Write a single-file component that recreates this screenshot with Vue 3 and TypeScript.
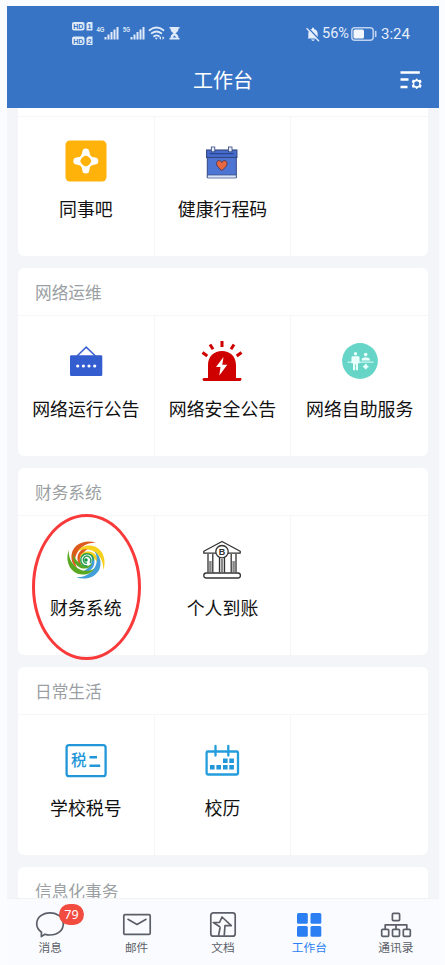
<script setup lang="ts">
interface AppItem {
  label: string
  icon: string
  marked?: boolean
}

interface Section {
  title: string
  items: AppItem[]
}

interface Tab {
  label: string
  icon: string
  badge?: number
  active?: boolean
}

const sections: Section[] = [
  {
    title: '',
    items: [
      { label: '同事吧', icon: 'circle' },
      { label: '健康行程码', icon: 'health' },
    ],
  },
  {
    title: '网络运维',
    items: [
      { label: '网络运行公告', icon: 'notice' },
      { label: '网络安全公告', icon: 'alarm' },
      { label: '网络自助服务', icon: 'service' },
    ],
  },
  {
    title: '财务系统',
    items: [
      { label: '财务系统', icon: 'swirl', marked: true },
      { label: '个人到账', icon: 'bank' },
    ],
  },
  {
    title: '日常生活',
    items: [
      { label: '学校税号', icon: 'tax' },
      { label: '校历', icon: 'calendar' },
    ],
  },
  { title: '信息化事务', items: [] },
]

const tabs: Tab[] = [
  { label: '消息', icon: 'chat', badge: 79 },
  { label: '邮件', icon: 'mail' },
  { label: '文档', icon: 'docs' },
  { label: '工作台', icon: 'grid', active: true },
  { label: '通讯录', icon: 'contacts' },
]

const swirlArms = [
  { angle: 0, color: '#dc5a1c' },
  { angle: 90, color: '#f7cf1d' },
  { angle: 180, color: '#429fd8' },
  { angle: 270, color: '#5aa822' },
]
</script>

<template>
  <div class="phone">
    <header class="header">
      <div class="status">
        <svg class="signals" width="110" height="26" viewBox="0 0 110 26">
          <g fill="#dfeaf9">
            <rect x="0" y="2" width="12.5" height="8.5" rx="2" />
            <rect x="0" y="16.500" width="12.500" height="8.500" rx="2" />
            <path d="M16 2h4.500v8.500h-6v-7z" />
            <path d="M16 16.500h4.500v8.500h-6v-7z" />
            <rect x="32.500" y="17" width="2" height="2.500" />
            <rect x="35.500" y="14.500" width="2" height="5" />
            <rect x="38.500" y="12" width="2" height="7.500" />
            <rect x="41.500" y="9.500" width="2" height="10" />
            <rect x="44.500" y="7" width="2" height="12.500" />
            <rect x="58.500" y="17" width="2" height="2.500" />
            <rect x="61.500" y="14.500" width="2" height="5" />
            <rect x="64.500" y="12" width="2" height="7.500" />
            <rect x="67.500" y="9.500" width="2" height="10" />
            <rect x="70.500" y="7" width="2" height="12.500" />
            <path d="M97.500 7h10v1.500h-1c0 2.500-1 3.500-3 4.800c2 1.200 3 2.500 3 4.700h1v1.500h-10v-1.500h1c0-2.200 1-3.500 3-4.700c-2-1.300-3-2.300-3-4.800h-1z" />
          </g>
          <path d="M100.500 17.500l2-2 2 2z" fill="#3874c6" />
          <g class="tiny-box">
            <text x="1.200" y="9">HD</text>
            <text x="1.200" y="23.500">HD</text>
            <text x="15.600" y="9">1</text>
            <text x="15.600" y="23.500">2</text>
          </g>
          <text class="net" x="24.500" y="12" textLength="8" lengthAdjust="spacingAndGlyphs">4G</text>
          <text class="net" x="51" y="12" textLength="7" lengthAdjust="spacingAndGlyphs">5G</text>
          <g fill="none" stroke="#dfeaf9" stroke-width="1.800" stroke-linecap="round">
            <path d="M77.500 10.200q7-5.400 14 0" />
            <path d="M79.700 13.300q4.800-3.600 9.600 0" />
            <path d="M82 16.300q2.500-1.900 5 0" />
          </g>
          <path d="M82.800 17.800h3l-1.500 2zM87 18l2-1.800v3.600zM92.500 18l-2-1.800v3.600z" fill="#dfeaf9" />
        </svg>
        <div class="power">
          <svg width="14" height="15" viewBox="0 0 14 15">
            <path d="M2.300 11V7C2.300 4 4 2.300 6 2V.8h2V2c2.500.5 3.700 2.500 3.700 5v3.300l1 1.200H1.500zM5 12.500h4q-2 2.800-4 0z" fill="#e5eefa" />
            <path d="M1.800.8l12 12.500" stroke="#3874c6" stroke-width="1.600" />
            <path d="M.6 1.200l12.400 13" stroke="#e5eefa" stroke-width="1.300" />
          </svg>
          <span class="percent">56%</span>
          <svg width="26" height="14" viewBox="0 0 26 14">
            <rect x=".8" y=".8" width="21.400" height="12.400" rx="3" fill="none" stroke="#bdd2ee" stroke-width="1.500" />
            <rect x="2.500" y="2.500" width="10.500" height="9" rx="1.500" fill="#f1f6fd" />
            <rect x="23.800" y="3.800" width="1.700" height="6.400" rx=".8" fill="#bdd2ee" />
          </svg>
          <span class="clock">3:24</span>
        </div>
      </div>
      <div class="titlebar">
        <h1>工作台</h1>
        <svg class="settings" width="24" height="20" viewBox="0 0 24 20">
          <path d="M1.500 2.500h19.300M1.500 9.500h8M1.500 17h7" stroke="#fff" stroke-width="2.300" />
          <path d="M17.700 8.200l1.600 1.900 2.500-.4.800 2.300-1.500 1.700 1.500 1.900-.8 2.200-2.500-.4-1.600 1.900-1.600-1.900-2.500.4-.8-2.200 1.500-1.900-1.500-1.700.8-2.300 2.500.4z" fill="#fff" />
          <circle cx="17.700" cy="13.800" r="2.500" fill="#3874c6" />
        </svg>
      </div>
    </header>

    <main class="content">
      <section v-for="(section, i) in sections" :key="i" class="card" :class="{ clipped: i === 0 }">
        <h2>{{ section.title }}</h2>
        <div v-if="section.items.length" class="cells">
          <div v-for="n in 3" :key="n" class="cell">
            <template v-if="section.items[n - 1]">
              <svg v-if="section.items[n - 1].icon === 'circle'" class="icon" viewBox="0 0 42 42">
                <rect x=".5" y=".5" width="41" height="41" rx="4.500" fill="#ffb20a" />
                <g v-for="turn in [0, 90, 180, 270]" :key="turn" :transform="`rotate(${turn} 20.8 21)`" fill="#fff">
                  <circle cx="20.800" cy="12" r="3.500" />
                  <path d="M17.300 12Q17 15.500 14 18.200L15.300 19.300Q19 15.300 21.500 15.500zM24.300 12Q24.600 15.500 27.600 18.200L26.300 19.300Q22.600 15.300 20.100 15.500z" />
                </g>
              </svg>
              <svg v-else-if="section.items[n - 1].icon === 'health'" class="icon" viewBox="0 0 42 42">
                <path d="M6.300 15.500h29v22h-29z" fill="#4f75d3" stroke="#32477f" stroke-width="1" />
                <path d="M6.300 35h29v3h-29z" fill="#dce6f8" stroke="#32477f" stroke-width=".7" />
                <rect x="5.600" y="10" width="30.300" height="7.500" fill="#466bca" stroke="#32477f" stroke-width="1.100" />
                <path d="M8.500 13.700h24" stroke="#263e83" />
                <rect x="10.300" y="7" width="3.500" height="4.800" fill="#e9eefb" stroke="#32477f" stroke-width=".8" />
                <rect x="27.500" y="7" width="3.500" height="4.800" fill="#e9eefb" stroke="#32477f" stroke-width=".8" />
                <path d="M20.800 30.500C18.500 28.700 15.500 26.300 15.500 23.500C15.500 20 19.500 19.700 20.800 22.500C22.100 19.700 26.100 20 26.100 23.500C26.100 26.300 23 28.700 20.800 30.500Z" fill="#e8673f" stroke="#4a3452" stroke-width=".9" />
              </svg>
              <svg v-else-if="section.items[n - 1].icon === 'notice'" class="icon" viewBox="0 0 42 42">
                <path d="M12 16l9.200-8.800 9.300 8.800" fill="none" stroke="#3d63d2" stroke-width="1.600" />
                <rect x="5" y="15.300" width="32.300" height="20.700" rx="1.300" fill="#345ed0" />
                <g fill="#fff">
                  <circle cx="12.700" cy="26" r="1.600" />
                  <circle cx="18.400" cy="26" r="1.600" />
                  <circle cx="24" cy="26" r="1.600" />
                  <circle cx="29.700" cy="26" r="1.600" />
                </g>
              </svg>
              <svg v-else-if="section.items[n - 1].icon === 'alarm'" class="icon" viewBox="0 0 42 42">
                <path d="M7 38.500V25C7 16.500 13 11 21 11S35 16.500 35 25V38h4.500q1.500 0 1 1.500t-2 1.500h-35q-1.500 0-2-1.500T3 38h4z" fill="#cf0000" />
                <path d="M1.500 12.500l4.800 3.500M9 4.500l3 4.700M21 1v6M33 4.500l-3 4.700M40.500 12.500l-4.800 3.500" stroke="#cf0000" stroke-width="3" />
                <path d="M22.500 17L15 27h4.500L18.300 35.500l8-10.700h-5z" fill="#fff" />
              </svg>
              <svg v-else-if="section.items[n - 1].icon === 'service'" class="icon" viewBox="0 0 42 42">
                <circle cx="21" cy="21" r="17.900" fill="#66d5c7" />
                <g fill="#e9fffb">
                  <path d="M8.500 21.500h26v1.300h-26z" opacity=".75" />
                  <circle cx="16.500" cy="13.800" r="1.700" />
                  <path d="M13.500 16.200h6q1 0 1 1v6h-1.500v7h-2.100v-6h-.8v6h-2.100v-7h-1.500v-6q0-1 1-1z" />
                  <circle cx="26.700" cy="14.600" r="1.800" />
                  <path d="M22.500 20.500q0-3 3-3h2.500q3 0 3 3zM26 24h1.500l.5 1.500 1.500.5v1.300l-1.500.5-.5 1.500H26l-.5-1.500-1.500-.5V26l1.500-.5z" />
                </g>
              </svg>
              <svg v-else-if="section.items[n - 1].icon === 'swirl'" class="icon" viewBox="0 0 42 42">
                <g v-for="arm in swirlArms" :key="arm.angle" :transform="`rotate(${arm.angle} 21 21)`" :fill="arm.color">
                  <path d="M31 3.800C22 .3 11 3.500 7.500 12C5 19 7 26 12.500 29.500C9.500 25 9.500 19 11.800 14.500C15.500 7.500 22 3.300 31 3.800Z" />
                  <path d="M27.500 8.500C21 7 14.500 10.500 12.800 16.500C11.500 21.500 14 26 18 27.500C15.500 24.500 15 21 16.300 17.700C18 13 22 9.500 27.500 8.500Z" />
                </g>
                <circle cx="21" cy="21" r="6.200" fill="#fff" />
                <path d="M28.500 21.500C28.500 14.500 20 12.500 16.800 17.500C14 22.500 17.500 27.500 22.500 27M25 24C28 19.500 22.500 15 19.300 18.300C16.800 21 19 24.800 22 24" fill="none" stroke="#2ca052" stroke-width="1.500" />
                <circle cx="21" cy="21" r="1.800" fill="#159447" />
              </svg>
              <svg v-else-if="section.items[n - 1].icon === 'bank'" class="icon" viewBox="0 0 42 42">
                <g fill="#fff" stroke="#333" stroke-width="1.300" stroke-linejoin="round">
                  <path d="M7 15v18.500M11.800 15v18.500M18.500 18v15.500M23.500 18v15.500M30.200 15v18.500M35 15v18.500" />
                  <path d="M2.800 12.300L21 2.500l18.200 9.800v1.900H2.800z" />
                  <circle cx="21" cy="12.700" r="6.200" />
                  <rect x="2.800" y="34" width="36.600" height="5" rx="2.500" />
                </g>
                <path d="M9.400 22v11M21 20v13M32.600 22v11" stroke="#888" stroke-width="2.500" />
                <text class="coin" x="21" y="16">B</text>
              </svg>
              <svg v-else-if="section.items[n - 1].icon === 'tax'" class="icon" viewBox="0 0 42 42">
                <rect x="1.600" y="6.200" width="39" height="31" rx="2.500" fill="none" stroke="#2196d8" stroke-width="2.300" />
                <text class="taxchar" x="6" y="27">税</text>
                <path d="M24.500 18.300h7.500M24.500 26.700h10.700" stroke="#2196d8" stroke-width="2.500" />
              </svg>
              <svg v-else class="icon" viewBox="0 0 42 42">
                <g fill="none" stroke="#249ddc" stroke-width="2.300">
                  <rect x="5.600" y="12.500" width="31.400" height="23" rx="1.200" />
                  <path d="M14.500 7v9.500M27.300 7v9.500" stroke-linecap="round" />
                </g>
                <path d="M22 19.500h4.600v4.600H22zM28.300 19.500h4.600v4.600h-4.600zM9 26h4.600v4.500H9zM15.400 26H20v4.500h-4.600zM22 26h4.600v4.500H22zM28.300 26h4.600v4.500h-4.600z" fill="#2196d8" />
              </svg>
              <span class="label">{{ section.items[n - 1].label }}</span>
              <span v-if="section.items[n - 1].marked" class="marker"></span>
            </template>
          </div>
        </div>
      </section>
    </main>

    <nav class="tabs">
      <div v-for="tab in tabs" :key="tab.label" class="tab" :class="{ active: tab.active }">
        <svg class="tab-icon" viewBox="0 0 32 28" fill="none" stroke="currentColor" stroke-width="1.700" stroke-linejoin="round">
          <path v-if="tab.icon === 'chat'" d="M7.500 22.200C4.500 20 2.700 17.200 2.700 14C2.700 7.500 8.500 2.800 16 2.800S29.300 7.500 29.300 14S23.500 25 16 25c-1.800 0-3.500-.2-5-.8L7.300 26.500z" />
          <template v-else-if="tab.icon === 'mail'">
            <rect x="2.800" y="4.600" width="26.400" height="19.800" rx="1.200" />
            <path d="M6.500 9l9.500 5.500L25.500 9" />
          </template>
          <template v-else-if="tab.icon === 'docs'">
            <rect x="3.800" y="2.800" width="24.400" height="23.400" rx="2.500" />
            <path d="M13.200 17L6.300 12.500h6.200L15 7l9.300 8.700-6.300-.2-.8 10.300M13.200 17l-1.700 8.800" />
          </template>
          <g v-else-if="tab.icon === 'grid'" fill="currentColor" stroke="none">
            <rect x="4" y="3" width="10.800" height="10.800" rx="1.500" />
            <rect x="17.500" y="3" width="10.800" height="10.800" rx="1.500" />
            <rect x="4" y="16" width="10.800" height="10.800" rx="1.500" />
            <rect x="17.500" y="16" width="10.800" height="10.800" rx="1.500" />
          </g>
          <template v-else>
            <rect x="12.400" y="3.400" width="7.200" height="7.200" rx="1" />
            <rect x="1.700" y="19.300" width="7" height="7" rx="1" />
            <rect x="12.500" y="19.300" width="7" height="7" rx="1" />
            <rect x="23.300" y="19.300" width="7" height="7" rx="1" />
            <path d="M16 14.800v4.500M5.200 19.300v-4.500h21.600v4.500" />
          </template>
        </svg>
        <span class="tab-label">{{ tab.label }}</span>
        <span v-if="tab.badge" class="badge">{{ tab.badge }}</span>
      </div>
    </nav>
  </div>
</template>

<style>
body {
  background: #fbfcff;
}
</style>

<style scoped>
.phone {
  box-sizing: border-box;
  width: 432px;
  height: 959px;
  margin: 6px 0 0 7px;
  display: flex;
  flex-direction: column;
  overflow: hidden;
  background: #f3f5f8;
  font-family: "Noto Sans CJK SC", sans-serif;
}

.header {
  flex: none;
  height: 102px;
  background: #3874c6;
  color: #fff;
}

.status {
  display: flex;
  justify-content: space-between;
  padding: 14px 30px 0 65px;
  height: 41px;
}

.tiny-box text {
  font: bold 7px "Liberation Sans", sans-serif;
  fill: #3874c6;
}

.net {
  font: bold 7px "Liberation Sans", sans-serif;
  fill: #dfeaf9;
}

.power {
  display: flex;
  align-items: center;
  height: 28px;
  color: #e5eefa;
  font: 15px/28px Roboto, sans-serif;
}

.percent {
  width: 28px;
  margin: 0 1px 0 2px;
  font-size: 14.500px;
}

.clock {
  width: 28px;
  margin-left: 4px;
}

.titlebar {
  display: grid;
  grid-template-columns: 1fr auto 1fr;
  align-items: center;
  height: 38px;
}

h1 {
  grid-column: 2;
  margin: 0;
  font-size: 20px;
  font-weight: 400;
  line-height: 38px;
}

.settings {
  justify-self: end;
  margin-right: 16px;
}

.content {
  flex: 1;
  min-height: 0;
  display: flex;
  flex-direction: column;
  gap: 12px;
  padding: 0 11px;
  overflow: hidden;
}

.card {
  flex: none;
  border-radius: 6px;
  background: #fff;
}

.card h2 {
  box-sizing: border-box;
  height: 48px;
  margin: 0;
  padding-left: 17px;
  border-bottom: 1px solid #f5f6f7;
  color: #9b9fa3;
  font-size: 16.700px;
  font-weight: 400;
  line-height: 48px;
}

.clipped {
  border-radius: 0 0 6px 6px;
}

.card.clipped h2 {
  height: 8.500px;
}

.cells {
  display: grid;
  grid-template-columns: repeat(3, 1fr);
  height: 139.500px;
}

.cell {
  position: relative;
  box-sizing: border-box;
  display: flex;
  flex-direction: column;
  align-items: center;
  padding-top: 23.500px;
  border-right: 1px solid #f5f6f7;
}

.cell:last-child {
  border-right: 0;
}

.icon {
  flex: none;
  width: 42px;
  height: 42px;
}

.label {
  margin-top: 13px;
  color: #111;
  font-size: 17.900px;
  line-height: 26px;
  white-space: nowrap;
}

.marker {
  position: absolute;
  top: -2px;
  left: 14px;
  box-sizing: border-box;
  width: 109px;
  height: 146px;
  border: 3px solid #fa3a3a;
  border-radius: 50%;
  z-index: 1;
}

.coin {
  font: bold 9px "Liberation Sans", sans-serif;
  fill: #333;
  text-anchor: middle;
}

.taxchar {
  font-size: 15.500px;
  font-weight: 500;
  fill: #2196d8;
}

.tabs {
  flex: none;
  display: grid;
  grid-template-columns: repeat(5, 1fr);
  box-sizing: border-box;
  height: 67px;
  border-top: 1px solid #f0f2f4;
  background: #fafbfe;
}

.tab {
  position: relative;
  display: flex;
  flex-direction: column;
  align-items: center;
  padding-top: 11px;
  color: #5b5f68;
}

.active {
  color: #2b7ff2;
}

.tab-icon {
  width: 32px;
  height: 28px;
}

.tab-label {
  margin-top: 0;
  font-size: 11.700px;
  line-height: 18px;
}

.badge {
  position: absolute;
  top: 4.500px;
  left: 52px;
  width: 25px;
  height: 21px;
  border-radius: 11px;
  background: #f24b40;
  color: #fff;
  font: 12.500px/21px "Noto Sans", sans-serif;
  text-align: center;
}
</style>
